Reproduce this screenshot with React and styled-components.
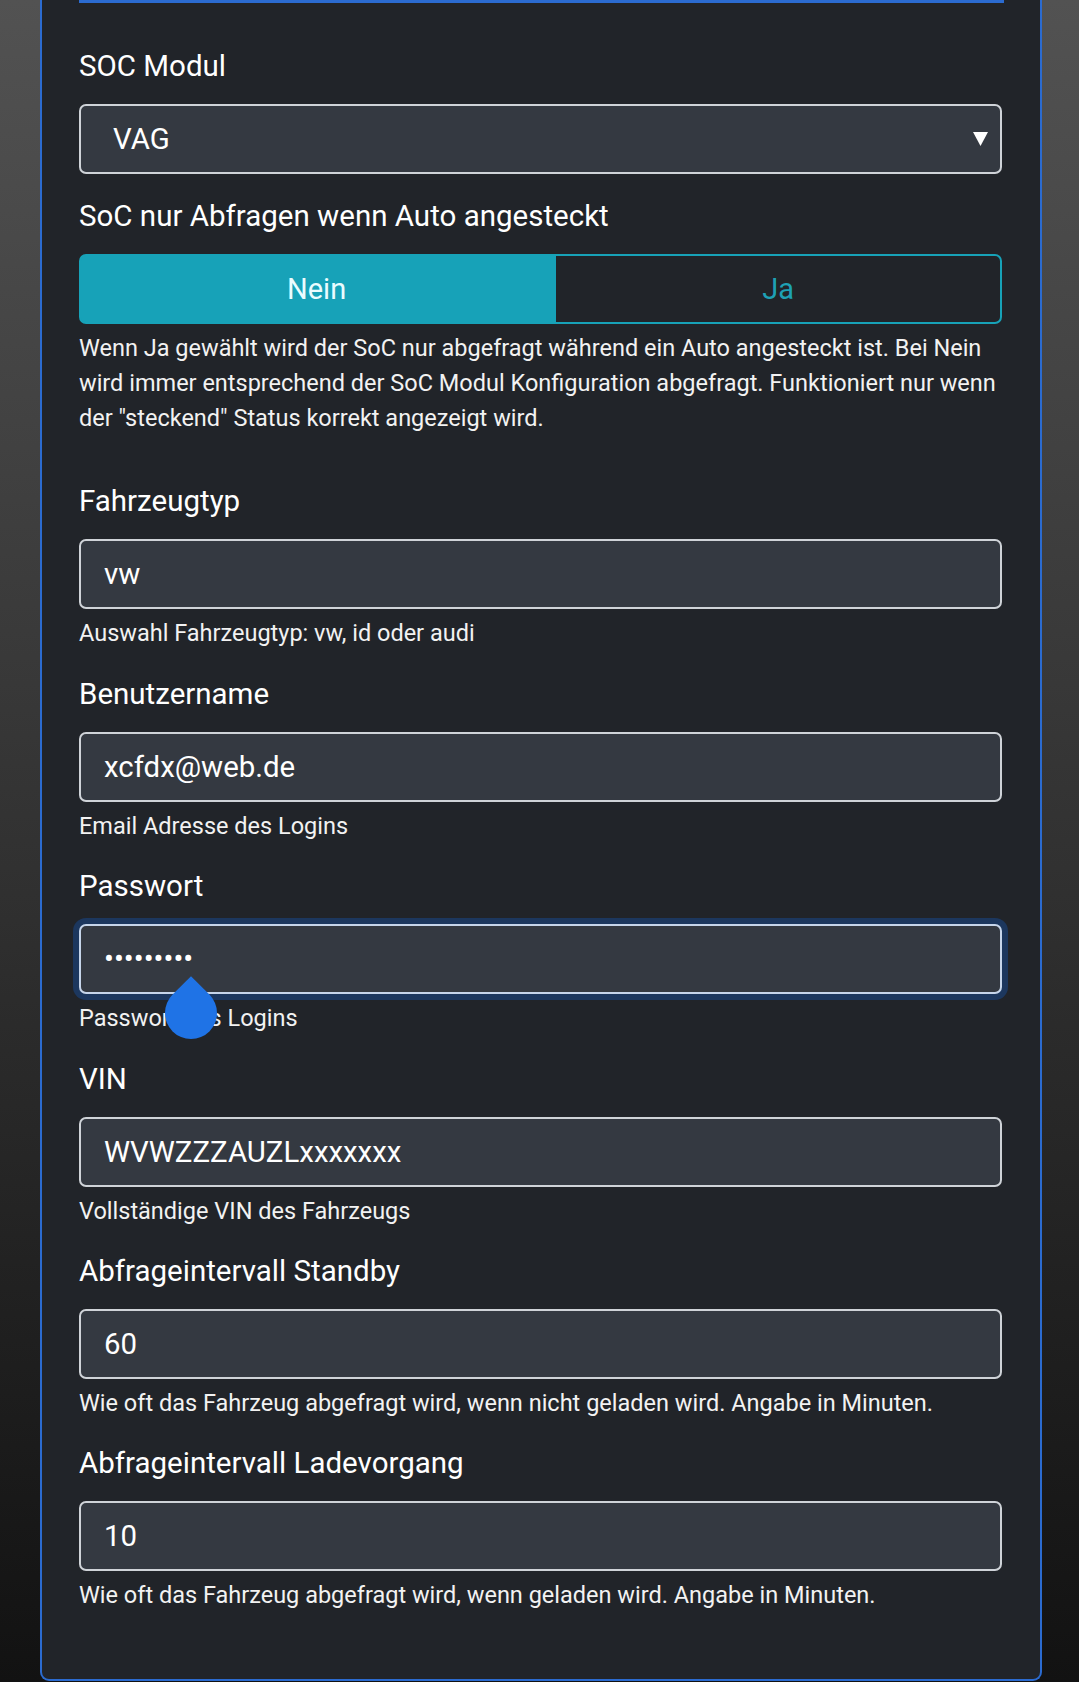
import React from "react";
import styled, { createGlobalStyle } from "styled-components";

const GlobalStyle = createGlobalStyle`
  html, body {
    margin: 0;
    padding: 0;
  }
  body {
    min-height: 1682px;
    background: linear-gradient(to bottom, #525252, #121212);
    font-family: Roboto, "Noto Sans", sans-serif;
  }
`;

const Card = styled.div`
  box-sizing: border-box;
  margin: 0 37px 0 40px;
  padding: 0 38px 40px 37px;
  background: #212429;
  border: 2px solid #2b6bd0;
  border-top: none;
  border-radius: 0 0 9px 9px;
`;

const Divider = styled.div`
  height: 3px;
  margin: 0 -2px 46px 0;
  background: #2b6bd0;
`;

const Group = styled.div`
  position: relative;
  margin-bottom: ${(p) => p.$gap || 25.4}px;
`;

const Label = styled.label`
  display: block;
  height: 35px;
  margin-bottom: 20px;
  font-size: 29.5px;
  line-height: 35px;
  color: #ffffff;
`;

const Input = styled.input`
  box-sizing: border-box;
  display: block;
  width: 100%;
  height: 70px;
  margin: 0;
  padding: 0 23px;
  font-family: Roboto, "Noto Sans", sans-serif;
  font-size: 29.4px;
  color: #ffffff;
  background: #343941;
  border: 2px solid ${(p) => (p.$focused ? "#c6d5ea" : "#cfd3d8")};
  border-radius: 7px;
  box-shadow: ${(p) => (p.$focused ? "0 0 0 6px #1c375e" : "none")};
  outline: none;
`;

const SelectWrap = styled.div`
  position: relative;
`;

const Select = styled.select`
  box-sizing: border-box;
  display: block;
  width: 100%;
  height: 70px;
  padding: 0 50px 0 32px;
  font-family: Roboto, "Noto Sans", sans-serif;
  font-size: 29.4px;
  color: #ffffff;
  background: #343941;
  border: 2px solid #cfd3d8;
  border-radius: 7px;
  appearance: none;
  outline: none;
`;

const Arrow = styled.svg`
  position: absolute;
  right: 14px;
  top: 28px;
  pointer-events: none;
`;

const Toggle = styled.div`
  display: flex;
  height: 70px;
`;

const ToggleButton = styled.button`
  flex: 1 1 auto;
  margin: 0;
  padding: 0 12px;
  font-family: Roboto, "Noto Sans", sans-serif;
  font-size: 29px;
  border: 2px solid #17a2b8;
  background: ${(p) => (p.$active ? "#17a2b8" : "transparent")};
  color: ${(p) => (p.$active ? "#eafcff" : "#1ea1b5")};

  &:first-child {
    border-radius: 7px 0 0 7px;
  }
  &:last-child {
    border-radius: 0 7px 7px 0;
  }
`;

const Help = styled.div`
  margin-top: 7px;
  font-size: 23.5px;
  line-height: 35px;
  color: #f2f2f2;
`;

const Handle = styled.div`
  position: absolute;
  left: 86px;
  top: 118px;
  width: 52px;
  height: 52px;
  background: #1f73e6;
  border-radius: 0 50% 50% 50%;
  transform: rotate(45deg);
`;

const fields = [
  { label: "Fahrzeugtyp", value: "vw", help: "Auswahl Fahrzeugtyp: vw, id oder audi" },
  { label: "Benutzername", value: "xcfdx@web.de", help: "Email Adresse des Logins" },
  { label: "Passwort", value: "123456789", help: "Passwort des Logins", password: true },
  { label: "VIN", value: "WVWZZZAUZLxxxxxxx", help: "Vollständige VIN des Fahrzeugs" },
  {
    label: "Abfrageintervall Standby",
    value: "60",
    help: "Wie oft das Fahrzeug abgefragt wird, wenn nicht geladen wird. Angabe in Minuten.",
  },
  {
    label: "Abfrageintervall Ladevorgang",
    value: "10",
    help: "Wie oft das Fahrzeug abgefragt wird, wenn geladen wird. Angabe in Minuten.",
  },
];

const App = () => {
  return (
    <>
      <GlobalStyle />
      <Card>
        <Divider />
        <Group>
          <Label>SOC Modul</Label>
          <SelectWrap>
            <Select defaultValue="vag">
              <option value="vag">VAG</option>
            </Select>
            <Arrow width="15" height="14" viewBox="0 0 15 14">
              <polygon points="0,0 15,0 7.5,14" fill="#ffffff" />
            </Arrow>
          </SelectWrap>
        </Group>
        <Group $gap={48}>
          <Label>SoC nur Abfragen wenn Auto angesteckt</Label>
          <Toggle>
            <ToggleButton $active>Nein</ToggleButton>
            <ToggleButton>Ja</ToggleButton>
          </Toggle>
          <Help>
            Wenn Ja gewählt wird der SoC nur abgefragt während ein Auto angesteckt ist. Bei Nein
            wird immer entsprechend der SoC Modul Konfiguration abgefragt. Funktioniert nur wenn
            der "steckend" Status korrekt angezeigt wird.
          </Help>
        </Group>
        {fields.map((f) => (
          <Group key={f.label}>
            <Label>{f.label}</Label>
            <Input
              type={f.password ? "password" : "text"}
              defaultValue={f.value}
              $focused={f.password}
            />
            <Help>{f.help}</Help>
            {f.password && <Handle />}
          </Group>
        ))}
      </Card>
    </>
  );
};

export default App;
